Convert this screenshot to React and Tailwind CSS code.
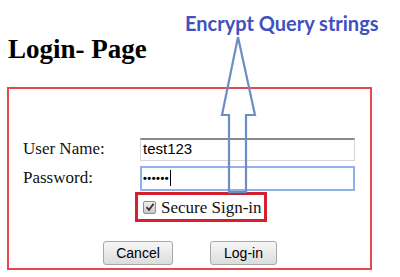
export default function App() {
  return (
    <div className="relative w-[400px] h-[277px] bg-white overflow-hidden">
      <h1 className="ml-[8px] pt-[34px] text-[27px] leading-[30px] font-bold text-black" style={{ fontFamily: '"Liberation Serif", serif' }}>
        Login- Page
      </h1>
      <div className="ml-[7px] mt-[23px] w-[365px] h-[183px] border-2 border-[#e5484d] pt-[48px]" style={{ fontFamily: '"Liberation Serif", serif' }}>
        <div className="flex items-center h-[24px]">
          <span className="w-[131px] pl-[14px] text-[17px] text-[#111]">User Name:</span>
          <div className="w-[215px] h-[23px] border border-[#d6d6d6] border-t-[#8a8a8a] border-t-2 bg-white flex items-center pl-[2px] text-[15px] text-black" style={{ fontFamily: '"Liberation Sans", Arial, sans-serif' }}>
            test123
          </div>
        </div>
        <div className="flex items-center h-[26px] mt-[4px]">
          <span className="w-[131px] pl-[14px] text-[17px] text-[#111]">Password:</span>
          <div className="w-[215px] h-[25px] border-2 border-[#8fb2e8] bg-white flex items-center pl-[1px] text-black" style={{ fontFamily: '"Liberation Sans", Arial, sans-serif' }}>
            <span className="tracking-[0.5px] text-[11px] font-bold leading-none">••••••</span>
            <span className="w-[1px] h-[16px] bg-black ml-[1px]"></span>
          </div>
        </div>
        <div className="ml-[126px] mt-[1px] w-[132px] h-[30px] border-[3px] border-[#d41f2c] flex items-center pl-[5px] gap-[5px]">
          <span className="w-[13px] h-[13px] border border-[#8e8e8e] rounded-[2px] bg-gradient-to-b from-[#f0f0f0] to-[#c8c8c8] flex items-center justify-center">
            <svg width="10" height="10" viewBox="0 0 10 10">
              <path d="M1.5 5.2 L4 7.8 L8.6 1.8" fill="none" stroke="#333" strokeWidth="1.8" />
            </svg>
          </span>
          <span className="text-[17px] text-[#111] leading-none">Secure Sign-in</span>
        </div>
        <div className="flex mt-[19px]" style={{ fontFamily: '"Liberation Sans", Arial, sans-serif' }}>
          <button className="ml-[94px] w-[70px] h-[24px] border border-[#a8a8a8] rounded-[3px] bg-gradient-to-b from-[#f7f7f7] to-[#dcdcdc] text-[14px] text-black">
            Cancel
          </button>
          <button className="ml-[37px] w-[67px] h-[24px] border border-[#a8a8a8] rounded-[3px] bg-gradient-to-b from-[#f7f7f7] to-[#dcdcdc] text-[14px] text-black">
            Log-in
          </button>
        </div>
      </div>
      <div className="absolute left-[185px] top-[10px] text-[20px] font-bold text-[#3f50c0] leading-[26px]" style={{ fontFamily: 'Lato, sans-serif' }}>
        Encrypt Query strings
      </div>
      <svg className="absolute left-0 top-0" width="400" height="277" viewBox="0 0 400 277">
        <path d="M238 37 L255 115 L246 115 L246 192 L229 192 L229 115 L222 115 Z" fill="none" stroke="#6c8ec2" strokeWidth="2.2" strokeLinejoin="miter" />
      </svg>
    </div>
  );
}
